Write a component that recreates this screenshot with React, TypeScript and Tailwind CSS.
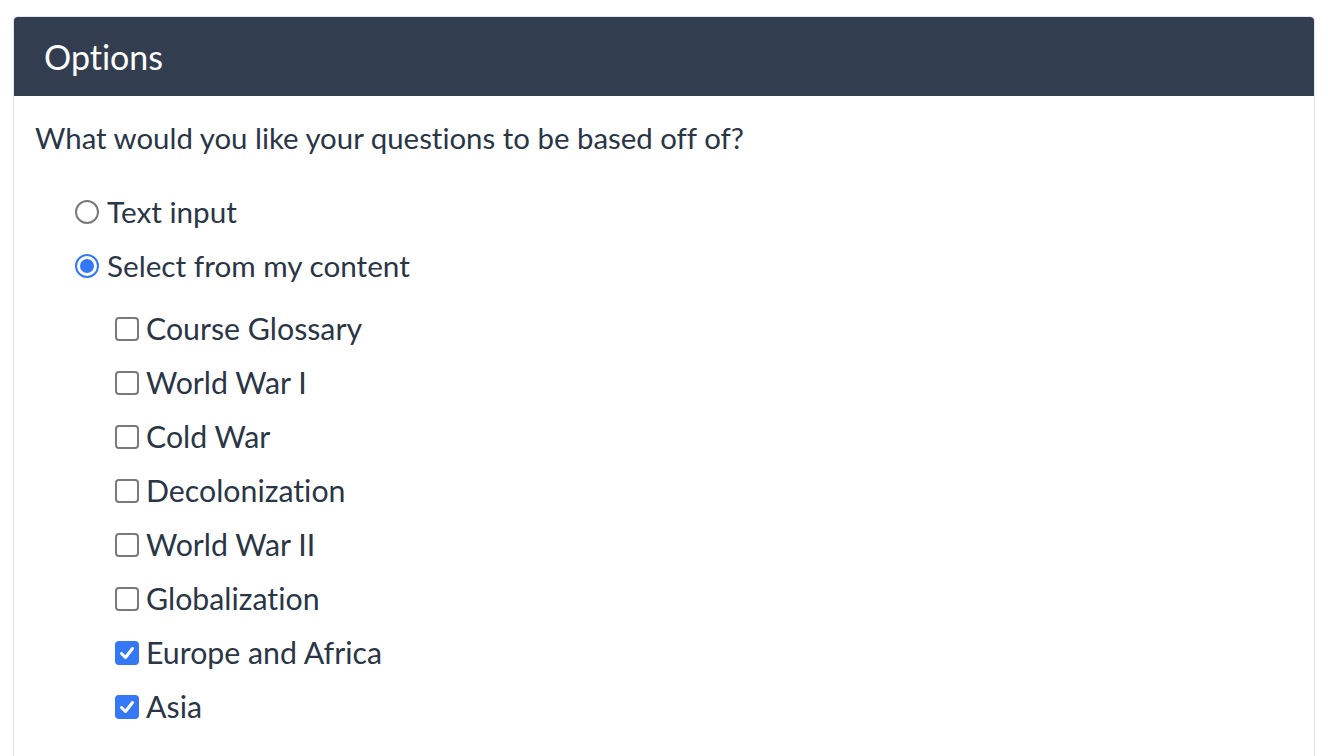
import React from "react";

function Radio({ checked, label }: { checked?: boolean; label: string }) {
  return (
    <div className="flex items-center h-[54px]">
      {checked ? (
        <span className="w-[24px] h-[24px] rounded-full border-[2px] border-[#3478f6] flex items-center justify-center shrink-0">
          <span className="w-[14px] h-[14px] rounded-full bg-[#3478f6]" />
        </span>
      ) : (
        <span className="w-[24px] h-[24px] rounded-full border-[2px] border-[#7a7a7a] shrink-0" />
      )}
      <span className="ml-[8px]">{label}</span>
    </div>
  );
}

function Check({ checked, label }: { checked?: boolean; label: string }) {
  return (
    <div className="flex items-center h-[54px]">
      {checked ? (
        <span className="w-[24px] h-[24px] rounded-[4px] bg-[#3478f6] flex items-center justify-center shrink-0">
          <svg width="18" height="18" viewBox="0 0 18 18">
            <path d="M3.5 9.5 L7.5 13.5 L14.5 4.5" fill="none" stroke="white" strokeWidth="3" strokeLinecap="round" strokeLinejoin="round" />
          </svg>
        </span>
      ) : (
        <span className="w-[24px] h-[24px] rounded-[4px] border-[2px] border-[#7a7a7a] shrink-0" />
      )}
      <span className="ml-[7px] text-[30.3px]">{label}</span>
    </div>
  );
}

export default function App() {
  const items: [string, boolean][] = [
    ["Course Glossary", false],
    ["World War I", false],
    ["Cold War", false],
    ["Decolonization", false],
    ["World War II", false],
    ["Globalization", false],
    ["Europe and Africa", true],
    ["Asia", true],
  ];
  return (
    <div className="bg-white min-h-[756px] pt-[16px] px-[13px] text-[#2a3646] [font-variant-ligatures:none]" style={{ fontFamily: "Lato, 'Open Sans', sans-serif" }}>
      <div className="border border-[#e3e6e8] rounded-t-[5px] overflow-hidden h-[760px]">
        <div className="bg-[#323e50] h-[79px] flex items-center px-[30px]">
          <span className="text-white text-[34px] leading-none">Options</span>
        </div>
        <div className="pl-[21px] pt-[24px]">
          <div className="text-[29.4px] leading-[36px]">What would you like your questions to be based off of?</div>
          <div className="pl-[40px] pt-[29px] text-[29.7px]">
            <Radio label="Text input" />
            <Radio checked label="Select from my content" />
            <div className="pl-[40px] pt-[9px]">
              {items.map(([l, c]) => (
                <Check key={l} label={l} checked={c} />
              ))}
            </div>
          </div>
        </div>
      </div>
    </div>
  );
}
